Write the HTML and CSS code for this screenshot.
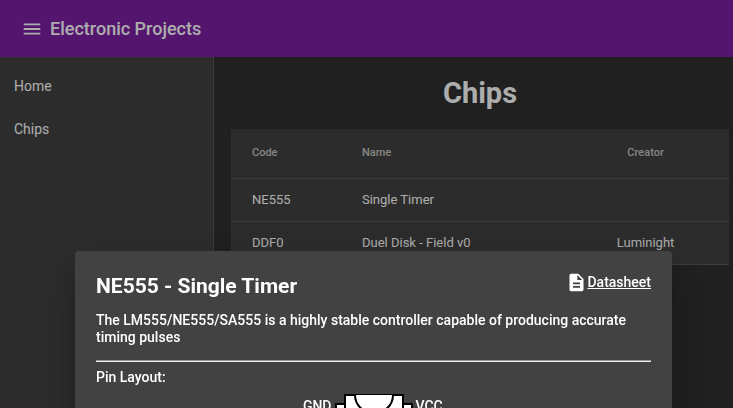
FILE: index.html
```html
<!DOCTYPE html>
<html lang="en">
<head>
<meta charset="utf-8">
<title>Electronic Projects</title>
<link rel="stylesheet" href="styles.css">
</head>
<body>
<div class="app">
  <header class="toolbar">
    <button class="menu-button" type="button" aria-label="Menu">
      <svg width="22" height="22" viewBox="0 0 24 24" fill="currentColor"><path d="M3 18h18v-2H3v2zm0-5h18v-2H3v2zm0-7v2h18V6H3z"/></svg>
    </button>
    <span class="brand">Electronic Projects</span>
  </header>
  <div class="body">
    <nav class="sidebar">
      <a href="#home">Home</a>
      <a href="#chips">Chips</a>
    </nav>
    <main class="content">
      <h1>Chips</h1>
      <table class="chips">
        <thead>
          <tr><th class="code">Code</th><th class="name">Name</th><th class="creator">Creator</th></tr>
        </thead>
        <tbody>
          <tr><td class="code">NE555</td><td class="name">Single Timer</td><td class="creator"></td></tr>
          <tr><td class="code">DDF0</td><td class="name">Duel Disk - Field v0</td><td class="creator">Luminight</td></tr>
        </tbody>
      </table>
    </main>
  </div>
</div>
<div class="backdrop">
  <section class="dialog" role="dialog" aria-labelledby="dialog-title">
    <div class="dialog-head">
      <h2 id="dialog-title">NE555 - Single Timer</h2>
      <a class="datasheet" href="#datasheet">
        <svg width="21" height="21" viewBox="0 0 24 24" fill="currentColor"><path d="M14 2H6c-1.100 0-1.990.900-1.990 2L4 20c0 1.100.890 2 1.990 2H18c1.100 0 2-.900 2-2V8l-6-6zm2 16H8v-2h8v2zm0-4H8v-2h8v2zm-3-5V3.500L18.500 9H13z"/></svg>
        <span>Datasheet</span>
      </a>
    </div>
    <p>The LM555/NE555/SA555 is a highly stable controller capable of producing accurate timing pulses</p>
    <hr>
    <p>Pin Layout:</p>
    <div class="pinout">
      <span class="pin left">GND</span>
      <svg class="chip" width="78" height="120" viewBox="0 0 78 120" fill="#fff" stroke="#000" stroke-width="2">
        <path d="M1 10h9v9H1zM1 36h9v9H1zM1 62h9v9H1zM1 88h9v9H1zM68 10h9v9h-9zM68 36h9v9h-9zM68 62h9v9h-9zM68 88h9v9h-9z"/>
        <path d="M10 1h58v118H10z"/>
        <path d="M20 1c0 10 8 18 19 18S58 11 58 1"/>
      </svg>
      <span class="pin">VCC</span>
    </div>
  </section>
</div>
</body>
</html>
```
FILE: styles.css
```css
* { box-sizing: border-box; }
body {
  margin: 0;
  overflow: hidden;
  background: #303030;
  color: #fff;
  font: 14px/17px Roboto, sans-serif;
}
a { color: inherit; }
.app { display: flex; flex-direction: column; min-height: 100vh; }
.toolbar {
  display: flex;
  align-items: center;
  gap: 7px;
  height: 57px;
  padding: 0 21px;
  background: #7b1fa2;
}
.menu-button {
  display: flex;
  padding: 0;
  border: 0;
  background: none;
  color: inherit;
}
.brand { font-size: 18px; font-weight: 500; line-height: 28px; }
.body { display: flex; flex: 1; }
.sidebar {
  flex: 0 0 214px;
  padding-top: 8px;
  background: #424242;
  border-right: 1px solid #585858;
}
.sidebar a {
  display: block;
  padding: 0 14px;
  line-height: 43px;
  text-decoration: none;
}
.content { flex: 1; padding: 18px 4px 0 17px; }
h1 {
  margin: 0 0 18px;
  font-size: 29px;
  line-height: 36px;
  text-align: center;
}
.chips {
  width: 100%;
  table-layout: fixed;
  border-collapse: separate;
  border-spacing: 0;
  background: #424242;
}
.chips th, .chips td {
  height: 43px;
  padding: 0 0 2px;
  border-bottom: 1px solid rgba(255, 255, 255, .12);
  font-size: 13px;
  text-align: left;
}
.chips th {
  height: 50px;
  color: rgba(255, 255, 255, .7);
  font-size: 11px;
  font-weight: 500;
}
.chips .code { width: 26.3%; padding-left: 21px; }
.chips .creator { width: 33.5%; text-align: center; }
.backdrop {
  position: fixed;
  inset: 0;
  padding: 251px 61px 0 75px;
  background: rgba(0, 0, 0, .32);
}
.dialog {
  min-height: 300px;
  padding: 21px;
  border-radius: 4px;
  background: #424242;
  font-weight: 500;
  box-shadow: 0 11px 15px -7px rgba(0, 0, 0, .2), 0 24px 38px 3px rgba(0, 0, 0, .14), 0 9px 46px 8px rgba(0, 0, 0, .12);
}
.dialog-head { display: flex; justify-content: space-between; align-items: flex-start; }
h2 { margin: 0; font-size: 21px; line-height: 28px; }
.datasheet { display: flex; align-items: center; text-decoration: none; }
.datasheet span { text-decoration: underline; }
.dialog p { margin: 0; }
.dialog-head + p { margin-top: 12px; }
hr {
  height: 2px;
  margin: 14px 0 7px;
  border: 0;
  border-top: 1px solid #9a9a9a;
  background: #eee;
}
.pinout { display: flex; justify-content: center; align-items: flex-start; gap: 3px; margin-top: 8px; }
.pin { width: 32px; padding-top: 4px; }
.left { text-align: right; }
```
